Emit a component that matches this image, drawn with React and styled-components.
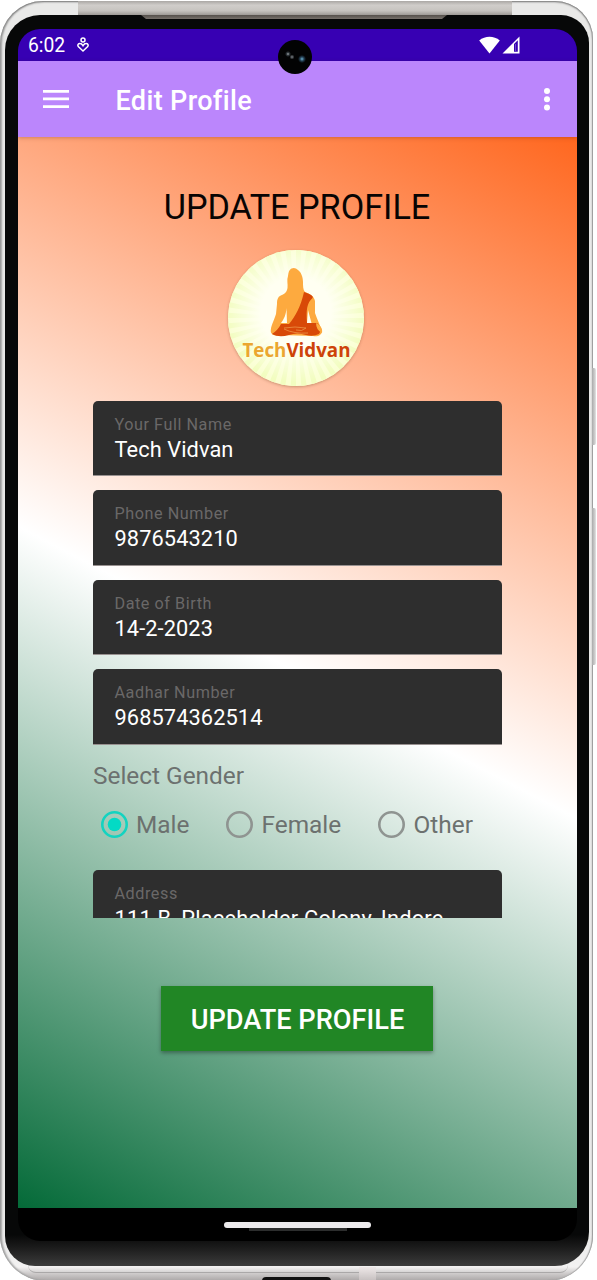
import React from "react";
import styled, { createGlobalStyle } from "styled-components";

const GlobalStyle = createGlobalStyle`
  *, *::before, *::after { box-sizing: border-box; }
  body { margin: 0; background: #fff; font-family: Roboto, "Liberation Sans", sans-serif; }
  button { font: inherit; }
`;

const Stage = styled.main`
  position: relative;
  width: 597px;
  height: 1280px;
  padding: 1px 0 0;
  overflow: hidden;
  background: #fff;
`;

const Frame = styled.div`
  position: relative;
  width: 593px;
  height: 1280px;
  padding: 14px 4px 14px 5px;
  border-radius: 43px 38px 46px 46px;
  background: linear-gradient(180deg, #e9e9e8 0%, #e9e9e8 96%, #f3f2f2 98.9%, #cfcccc 99.4%, #aaa6a6 100%);
  box-shadow: inset 0 1px 2px #777, inset 2px 0 2px #a7a7a7, inset -1px 0 1px #aaa;
`;

const TopBand = styled.div`
  position: absolute;
  left: 78px;
  top: 0;
  width: 434px;
  height: 14px;
  background: linear-gradient(180deg, #aaa7a4 0, #d0cdca 30%, #c6c3bf 70%, #9e9a96 100%);
`;

const SpeakerSlit = styled.div`
  position: absolute;
  left: 141px;
  top: 14px;
  width: 306px;
  height: 4px;
  background: linear-gradient(180deg, #55504b, #77716b);
  clip-path: polygon(0 0, 100% 0, calc(100% - 5px) 100%, 5px 100%);
`;

const SideKey = styled.div`
  position: absolute;
  left: 592px;
  top: ${({ $top }) => $top}px;
  width: 4px;
  height: ${({ $height }) => $height}px;
  border-radius: 0 2px 2px 0;
  background: linear-gradient(90deg, #aaa, #c9c9c9 60%, #e4e4e4);
`;

const BottomEdge = styled.div`
  position: absolute;
  left: 28px;
  top: 1264px;
  width: 540px;
  height: 8px;
  border-bottom: 1px solid #aaa8a8;
  border-radius: 0 0 24px 24px;
`;

const BottomSeam = styled.div`
  position: absolute;
  left: 359px;
  top: 1266px;
  width: 17px;
  height: 14px;
  background: linear-gradient(#eee8e8, #c5bfbf);
`;

const ChargePort = styled.div`
  position: absolute;
  left: 262px;
  top: 1277px;
  width: 69px;
  height: 8px;
  border-radius: 8px;
  background: #111;
`;

const Bezel = styled.div`
  height: 1251px;
  padding: 14px 12px 0 13px;
  border-radius: 35px 28px 34px 30px;
  background: linear-gradient(180deg, #070808 0, #070808 97.5%, #1b1b1b 98.5%, #3c3c3c 100%);
`;

const Screen = styled.div`
  display: flex;
  flex-direction: column;
  height: 1212px;
  border-radius: 22px;
  overflow: hidden;
  background: #000;
`;

const StatusBar = styled.div`
  display: flex;
  align-items: center;
  height: 32px;
  padding: 0 57px 0 10px;
  color: #fff;
  background: #3700b3;
`;

const Clock = styled.span`
  width: 49px;
  padding-top: 2px;
  font-size: 19.3px;
  line-height: 32px;
`;

const StatusIcons = styled.div`
  display: flex;
  gap: 2px;
  margin-left: auto;
  align-items: center;
`;

const Camera = styled.div`
  position: absolute;
  z-index: 2;
  left: 278px;
  top: 40px;
  width: 34px;
  height: 34px;
  border-radius: 50%;
  background:
    radial-gradient(circle at 24px 19px, #6eb1ce 0, #244256 2px, transparent 4px),
    radial-gradient(circle at 10px 14px, #a3a9ac 0, #30383c 1.5px, transparent 3px),
    radial-gradient(circle at 14px 17px, #7d858a 0, transparent 2.5px),
    #020303;
`;

const AppBar = styled.header`
  position: relative;
  display: flex;
  align-items: center;
  height: 76px;
  padding: 0 18px 0 25px;
  color: #fff;
  background: #bb86fc;
  box-shadow: 0 1px 4px rgba(70, 20, 0, 0.25);
  z-index: 1;
`;

const IconButton = styled.button`
  display: flex;
  padding: 0;
  border: 0;
  color: inherit;
  background: none;
`;

const BarTitle = styled.h1`
  flex: 1;
  margin: 3px 0 0 46.5px;
  font-size: 27px;
  font-weight: 500;
  letter-spacing: 0.35px;
`;

const Content = styled.section`
  display: flex;
  flex-direction: column;
  align-items: center;
  height: 1071px;
  padding-top: 50px;
  background: linear-gradient(27.6deg, #046a38 0%, #fff 50%, #ff671f 100%);
`;

const Heading = styled.h2`
  margin: 0 1px 0 0;
  font-size: 34.2px;
  font-weight: 400;
  line-height: 41px;
  white-space: nowrap;
  color: #080403;
`;

const Avatar = styled.div`
  width: 136px;
  height: 136px;
  margin: 22px 4px 0 0;
  border-radius: 50%;
  overflow: hidden;
  box-shadow: 0 1px 3px rgba(80, 40, 0, 0.3);
`;

const FormViewport = styled.div`
  width: 409px;
  height: 517px;
  margin: 15px 0 0;
  overflow: hidden;
`;

const Field = styled.label`
  display: block;
  height: 75.4px;
  margin-bottom: 14px;
  padding: 13.8px 21.5px 0;
  border-bottom: 1.5px solid #989190;
  border-radius: 5px 5px 0 0;
  background: #2e2e2e;
`;

const FieldLabel = styled.span`
  display: block;
  font-size: 16.2px;
  line-height: 20px;
  letter-spacing: 0.55px;
  color: #6a6868;
`;

const FieldValue = styled.span`
  display: block;
  margin-top: 1px;
  font-size: 21.8px;
  line-height: 28px;
  letter-spacing: ${({ $spacing = 0.08 }) => $spacing}px;
  white-space: nowrap;
  color: #fff;
`;

const GroupTitle = styled.div`
  padding-top: 1.5px;
  font-size: 24.4px;
  line-height: 32px;
  color: #6c716f;
`;

const RadioRow = styled.div`
  display: flex;
  padding-left: 7.5px;
  height: 64px;
  align-items: center;
  margin-bottom: 14px;
`;

const RadioOption = styled.div`
  display: flex;
  align-items: center;
  width: ${({ $width }) => $width}px;
  gap: 8.5px;
  font-size: 24.4px;
  line-height: 30px;
  color: #6c716f;
`;

const RadioName = styled.span`
  padding-top: 2px;
`;

const RadioMark = styled.svg`
  flex: none;
  width: 27px;
  height: 27px;
  fill: none;
  stroke: ${({ $on }) => ($on ? "#14d3c0" : "#8f9491")};
  stroke-width: 2.6;
`;

const SubmitButton = styled.button`
  width: 272px;
  height: 65px;
  margin: 68px 1px 0 0;
  padding: 3px 0 0 1px;
  border: 0;
  color: #fff;
  background: #218625;
  box-shadow: 0 2px 4px rgba(0, 0, 0, 0.35);
  font-size: 27.2px;
  font-weight: 500;
  white-space: nowrap;
`;

const NavBar = styled.div`
  display: flex;
  flex-direction: column;
  align-items: center;
  padding-top: 14px;
`;

const HomePill = styled.div`
  width: 147px;
  height: 6px;
  border-radius: 3px;
  background: #eceaec;
`;

const PillShade = styled.div`
  width: 98px;
  height: 3px;
  background: #2c2d2d;
`;

const fields = [
  ["Your Full Name", "Tech Vidvan"],
  ["Phone Number", "9876543210"],
  ["Date of Birth", "14-2-2023"],
  ["Aadhar Number", "968574362514"],
];

const genders = [
  ["Male", 125.5],
  ["Female", 152],
  ["Other", 100],
];

const rays = Array.from({ length: 40 }, (_, i) => {
  const a = (i * Math.PI) / 20;
  const b = a + Math.PI / 40;
  return `M68 68L${68 + 100 * Math.cos(a)} ${68 + 100 * Math.sin(a)}L${68 + 100 * Math.cos(b)} ${68 + 100 * Math.sin(b)}Z`;
}).join("");

function Logo() {
  return (
    <svg width="136" height="136" viewBox="0 0 136 136">
      <defs>
        <radialGradient id="glow">
          <stop offset="0.5" stopColor="#fffff2" />
          <stop offset="1" stopColor="#fffff2" stopOpacity="0" />
        </radialGradient>
      </defs>
      <rect width="136" height="136" fill="#faffd3" />
      <path d={rays} fill="#f2fdc0" />
      <circle cx="68" cy="62" r="70" fill="url(#glow)" />
      <path
        d="M63.5 18.5C61 20 60.5 22 60 26C58.5 30 60 34 59.5 38C59 41 58 43 55 44.5C50 46 49 49 49 54L48 64C46 71 42 77 43 82C44 86 48 86 52 85L85 86C90 87 94 85 94 81C92 75 89 69 87 63V51C86 46 82 44 77 42C75 40 75 36 75 32C75 27 73 22 70 20Q67 17 63.5 18.5Z"
        fill="#fdaa3f"
      />
      <path d="M58.5 58L59 73L53 73C56 69 58 65 58.5 58ZM80 60L83.5 73H79Z" fill="#fffff0" />
      <path
        d="M76 42C82 44 86 46 84.5 48C79 53 78 59 79 73L89 73C92 75 94 80 91 84Q85 87 78 85Q69 82 61 85Q51 88 44 84Q50 80 53 74H61C67 67 73 56 76 42Z"
        fill="#d84908"
      />
      <path d="M43 83C42 78 46 74 51 73Q50 80 43 83ZM94 83C95 78 92 75 88 73Q88 80 94 83Z" fill="#fdaa3f" />
      <path d="M56 78Q67 76 78 78Q74 82 68 80M56 79Q66 84 80 83" fill="none" stroke="#ef9f52" strokeWidth="0.7" />
      <text x="14.5" y="107" textLength="108" lengthAdjust="spacingAndGlyphs" fontFamily="Open Sans, sans-serif" fontSize="19.5" fontWeight="700">
        <tspan fill="#eba630">Tech</tspan>
        <tspan fill="#ce4309">Vidvan</tspan>
      </text>
    </svg>
  );
}

export default function App() {
  return (
    <>
      <GlobalStyle />
      <Stage>
        <Frame>
          <Bezel>
            <Screen>
              <StatusBar>
                <Clock>6:02</Clock>
                <svg width="12" height="16" viewBox="0 0 12 16" fill="none" stroke="#fff" strokeWidth="1.5">
                  <circle cx="6" cy="3" r="2" />
                  <path d="M6 14L1.5 9.8C0 8 1.4 6.3 3.2 6.5C4.8 6.6 5.5 8 6 8.7C6.5 8 7.2 6.6 8.8 6.5C10.6 6.3 12 8 10.5 9.8Z" />
                </svg>
                <StatusIcons>
                  <svg width="21" height="18" viewBox="0 0 21 18" fill="#fff">
                    <path d="M0.2 4.6C6 -0.4 15 -0.4 20.8 4.6L10.5 17.5Z" />
                  </svg>
                  <svg width="18" height="18" viewBox="0 0 18 18">
                    <path d="M0.5 17.5L17.5 0.5V17.5Z" fill="#fff" />
                    <path d="M12 8L15.8 4.3V15.8H12Z" fill="#3700b3" />
                    <path d="M13.5 8V15" stroke="#8869d0" strokeWidth="0.7" />
                  </svg>
                </StatusIcons>
              </StatusBar>
              <AppBar>
                <IconButton aria-label="Open menu">
                  <svg width="26" height="18" viewBox="0 0 26 18" fill="#fff">
                    <path d="M0 0H26V2.7H0ZM0 7.6H26V10.3H0ZM0 15.3H26V18H0Z" />
                  </svg>
                </IconButton>
                <BarTitle>Edit Profile</BarTitle>
                <IconButton aria-label="More options">
                  <svg width="24" height="24" viewBox="0 0 24 24" fill="#fff">
                    <circle cx="12" cy="4" r="3" />
                    <circle cx="12" cy="12.2" r="3" />
                    <circle cx="12" cy="20.4" r="3" />
                  </svg>
                </IconButton>
              </AppBar>
              <Content>
                <Heading>UPDATE PROFILE</Heading>
                <Avatar>
                  <Logo />
                </Avatar>
                <FormViewport>
                  {fields.map(([label, value]) => (
                    <Field key={label}>
                      <FieldLabel>{label}</FieldLabel>
                      <FieldValue>{value}</FieldValue>
                    </Field>
                  ))}
                  <GroupTitle>Select Gender</GroupTitle>
                  <RadioRow>
                    {genders.map(([name, width]) => (
                      <RadioOption key={name} $width={width}>
                        <RadioMark viewBox="0 0 27 27" $on={name === "Male"}>
                          <circle cx="13.5" cy="13.5" r="12.2" />
                          {name === "Male" && <circle cx="13.5" cy="13.5" r="6.8" fill="#03dac5" stroke="none" />}
                        </RadioMark>
                        <RadioName>{name}</RadioName>
                      </RadioOption>
                    ))}
                  </RadioRow>
                  <Field>
                    <FieldLabel>Address</FieldLabel>
                    <FieldValue $spacing={0.2}>111 B, Placeholder Colony, Indore</FieldValue>
                  </Field>
                </FormViewport>
                <SubmitButton>UPDATE PROFILE</SubmitButton>
              </Content>
              <NavBar>
                <HomePill />
                <PillShade />
              </NavBar>
            </Screen>
          </Bezel>
          <TopBand />
          <SpeakerSlit />
          <BottomEdge />
          <BottomSeam />
        </Frame>
        <ChargePort />
        <SideKey $top={368} $height={77} />
        <SideKey $top={508} $height={157} />
        <Camera />
      </Stage>
    </>
  );
}
